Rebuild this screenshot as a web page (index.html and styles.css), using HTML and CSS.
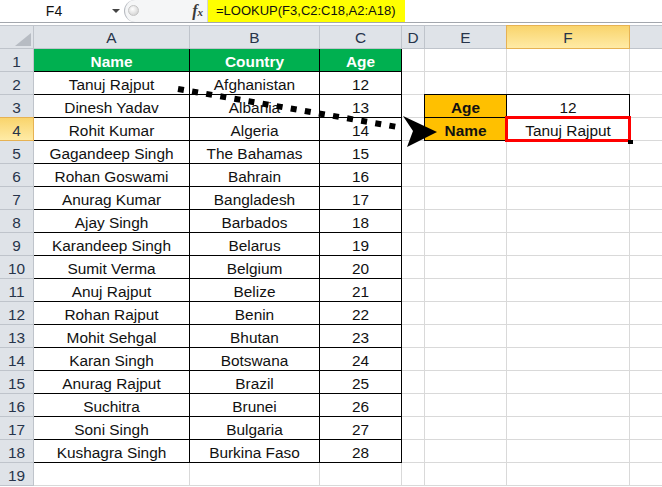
FILE: index.html
```html
<!DOCTYPE html>
<html lang="en">
<head>
    <meta charset="UTF-8">
    <meta name="viewport" content="width=device-width, initial-scale=1.0">
    <title>LOOKUP Example</title>
    <link rel="stylesheet" href="styles.css">
</head>
<body>
    <div class="formula-bar">
        <div class="name-box">
            <span class="cell-ref">F4</span>
            <span class="drop"></span>
        </div>
        <div class="bar-tools">
            <span class="knob"></span>
            <span class="fx">f<small>x</small></span>
        </div>
        <div class="formula">=LOOKUP(F3,C2:C18,A2:A18)</div>
    </div>
    <div class="bar-gap"></div>
    <div class="sheet" id="sheet"></div>

    <svg class="arrow" width="662" height="487" viewBox="0 0 662 487">
        <line x1="178" y1="89" x2="403" y2="128" stroke="#000" stroke-width="6" stroke-dasharray="6 8.3"/>
        <polygon points="403,116 437,132 407,147 413,131" fill="#000"/>
    </svg>

    <script>
        const letters = ["", "A", "B", "C", "D", "E", "F", "G"];
        const people = [
            ["Tanuj Rajput", "Afghanistan", 12],
            ["Dinesh Yadav", "Albania", 13],
            ["Rohit Kumar", "Algeria", 14],
            ["Gagandeep Singh", "The Bahamas", 15],
            ["Rohan Goswami", "Bahrain", 16],
            ["Anurag Kumar", "Bangladesh", 17],
            ["Ajay Singh", "Barbados", 18],
            ["Karandeep Singh", "Belarus", 19],
            ["Sumit Verma", "Belgium", 20],
            ["Anuj Rajput", "Belize", 21],
            ["Rohan Rajput", "Benin", 22],
            ["Mohit Sehgal", "Bhutan", 23],
            ["Karan Singh", "Botswana", 24],
            ["Anurag Rajput", "Brazil", 25],
            ["Suchitra", "Brunei", 26],
            ["Soni Singh", "Bulgaria", 27],
            ["Kushagra Singh", "Burkina Faso", 28]
        ];
        const sheet = document.getElementById("sheet");

        function addCell(text, cls) {
            let div = document.createElement("div");
            div.className = "cell " + cls;
            div.textContent = text;
            sheet.appendChild(div);
        }

        letters.forEach((letter, i) => {
            if (i === 0) addCell("", "corner");
            else if (letter === "F") addCell(letter, "col-head active");
            else if (letter === "G") addCell("", "col-head");
            else addCell(letter, "col-head");
        });

        for (let r = 1; r <= 19; r++) {
            addCell(r, r === 4 ? "row-head active" : "row-head");
            for (let c = 1; c <= 7; c++) {
                if (r === 1 && c <= 3) {
                    addCell(["Name", "Country", "Age"][c - 1], "title");
                } else if (r >= 2 && r <= 18 && c <= 3) {
                    addCell(people[r - 2][c - 1], "data");
                } else if (c === 5 && r === 3) {
                    addCell("Age", "label");
                } else if (c === 5 && r === 4) {
                    addCell("Name", "label");
                } else if (c === 6 && r === 3) {
                    addCell("12", "value");
                } else if (c === 6 && r === 4) {
                    addCell("Tanuj Rajput", "value selected");
                } else {
                    addCell("", "blank");
                }
            }
        }
    </script>
</body>
</html>
```

FILE: styles.css
```css
* {
    margin: 0;
    padding: 0;
    box-sizing: border-box;
}
body {
    width: 662px;
    height: 487px;
    overflow: hidden;
    background: #fff;
    font-family: "Liberation Sans", Arial, sans-serif;
    position: relative;
}
.formula-bar {
    display: flex;
    height: 23px;
    border-bottom: 1px solid #a3a7ad;
    background: #fff;
}
.name-box {
    width: 122px;
    display: flex;
    align-items: center;
}
.cell-ref {
    width: 108px;
    text-align: center;
    font-size: 14px;
    color: #111;
}
.drop {
    margin-left: 4px;
    border-left: 4px solid transparent;
    border-right: 4px solid transparent;
    border-top: 4px solid #444;
}
.bar-tools {
    width: 84px;
    margin-left: 2px;
    display: flex;
    align-items: center;
    justify-content: space-between;
    background: #f5f6f7;
    border-left: 1px solid #b5b9bf;
    border-right: 1px solid #d2d5d9;
    border-radius: 11px 0 0 11px;
    padding: 0 4px 0 3px;
}
.knob {
    width: 11px;
    height: 11px;
    margin-top: -2px;
    border-radius: 50%;
    border: 1px solid #c4c4c4;
    background: radial-gradient(circle at 40% 35%, #fff, #c9c9c9);
}
.fx {
    font-family: "Liberation Serif", serif;
    font-style: italic;
    font-weight: bold;
    font-size: 16px;
    color: #3a3a3a;
}
.fx small {
    font-size: 11px;
}
.formula {
    width: 197px;
    background: #ffff00;
    font-size: 13px;
    line-height: 22px;
    padding-left: 8px;
    color: #111;
    white-space: nowrap;
}
.bar-gap {
    height: 2px;
    background: #fff;
}
.sheet {
    display: grid;
    grid-template-columns: 33px 155px 129px 81px 22px 81px 122px 1fr;
    grid-template-rows: repeat(20, 22px);
    gap: 1px;
    padding: 1px 0;
    background: #d9d9d9;
}
.cell {
    background: #fff;
    font-size: 15.4px;
    line-height: 19px;
    padding-top: 3px;
    text-align: center;
    white-space: nowrap;
    color: #111;
}
.corner, .col-head, .row-head {
    background: #dfe3e8;
    color: #27344a;
    position: relative;
    z-index: 1;
    box-shadow: 0 0 0 1px #bfc4cb;
}
.col-head {
    padding-top: 2px;
}
.corner::after {
    content: "";
    position: absolute;
    right: 2px;
    bottom: 2px;
    width: 16px;
    height: 13px;
    background: #b7bcc3;
    clip-path: polygon(100% 0, 100% 100%, 0 100%);
}
.col-head.active, .row-head.active {
    background: linear-gradient(#f9d46c, #ffeba6);
    box-shadow: 0 0 0 1px #e6b253;
    z-index: 2;
}
.title {
    background: #00b050;
    color: #fff;
    font-weight: bold;
    box-shadow: 0 0 0 1px #000;
}
.data, .value {
    box-shadow: 0 0 0 1px #000;
}
.label {
    background: #ffc000;
    font-weight: bold;
    box-shadow: 0 0 0 1px #000;
}
.value.selected {
    position: relative;
    z-index: 2;
    box-shadow: inset 0 0 0 1px #f00, 0 0 0 2px #f00;
}
.value.selected::after {
    content: "";
    position: absolute;
    right: -4px;
    bottom: -4px;
    width: 5px;
    height: 4px;
    background: #000;
}
.arrow {
    position: absolute;
    left: 0;
    top: 0;
    z-index: 5;
    pointer-events: none;
}
```
